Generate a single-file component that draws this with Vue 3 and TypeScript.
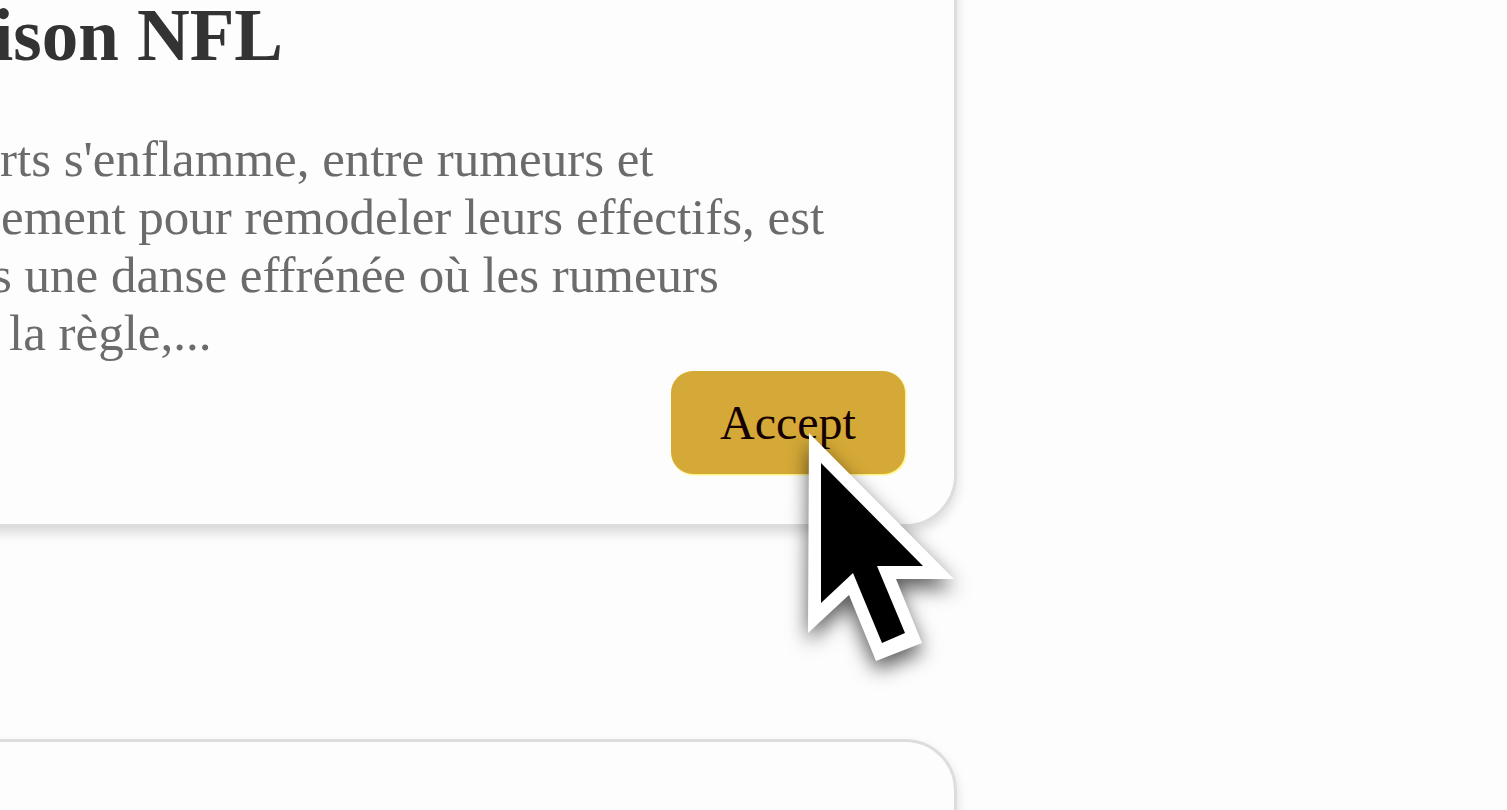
<script setup lang="ts">
interface Line {
  text: string
  start: number
}

const title = 'ison NFL'

const lines: Line[] = [
  { text: "rts s'enflamme, entre rumeurs et", start: 0 },
  { text: 'ement pour remodeler leurs effectifs, est', start: 1 },
  { text: 's une danse effrénée où les rumeurs', start: -8 },
  { text: 'la règle,...', start: 9 },
]
</script>

<template>
  <main class="page">
    <article class="card card-first">
      <h2 class="title">{{ title }}</h2>
      <p class="summary">
        <span
          v-for="line in lines"
          :key="line.text"
          class="line"
          :style="{ marginLeft: line.start + 'px' }"
        >{{ line.text }}</span>
      </p>
      <div class="actions">
        <div class="action">
          <button type="button" class="accept">Accept</button>
          <svg class="pointer" viewBox="0 0 200 280" aria-hidden="true">
            <polygon fill="#fff" points="20,20 165,166 107,166 133,230 87,248 60,182 19,220" />
            <polygon fill="#000" points="32,50 134,153 88,153 116,220 93,230 64,160 32,190" />
          </svg>
        </div>
      </div>
    </article>
    <article class="card card-next"></article>
  </main>
</template>

<style>
body {
  margin: 0;
  background: #fdfdfd;
}
</style>

<style scoped>
.page {
  display: flex;
  flex-direction: column;
  gap: 212px;
  height: 100vh;
  overflow: hidden;
  background: #fdfdfd;
  font-family: "Liberation Serif", "Times New Roman", serif;
}

.card {
  box-sizing: border-box;
  width: calc(63.5% + 80px);
  margin-left: -80px;
  border: 3px solid #dddddd;
  border-radius: 52px;
  background: #fdfdfd;
  box-shadow: 0 6px 12px rgba(0, 0, 0, 0.14);
}

.card-first {
  flex: none;
  margin-top: -80px;
  padding: 71px 49px 50px 77px;
}

.card-next {
  flex: 1 0 auto;
  margin-bottom: -80px;
}

.title {
  margin: 0 0 52px -7px;
  color: #333333;
  font-size: 73px;
  font-weight: 700;
  line-height: 84px;
  white-space: nowrap;
}

.summary {
  margin: 0;
  color: #6b6b6b;
  font-size: 51px;
  line-height: 58px;
}

.line {
  display: block;
  white-space: nowrap;
}

.actions {
  display: flex;
  justify-content: flex-end;
  margin-top: 9px;
}

.action {
  position: relative;
}

.accept {
  display: block;
  padding: 24px 49px;
  border: 0;
  border-radius: 22px;
  background: #d5a937;
  box-shadow: 1px 1px 2px #ffee50;
  color: #140000;
  font-family: inherit;
  font-size: 48px;
  line-height: 55px;
  cursor: pointer;
}

.pointer {
  position: absolute;
  top: 42px;
  left: 118px;
  width: 200px;
  height: 280px;
  overflow: visible;
  pointer-events: none;
  filter: drop-shadow(0 9px 10px rgba(0, 0, 0, 0.65));
}
</style>
